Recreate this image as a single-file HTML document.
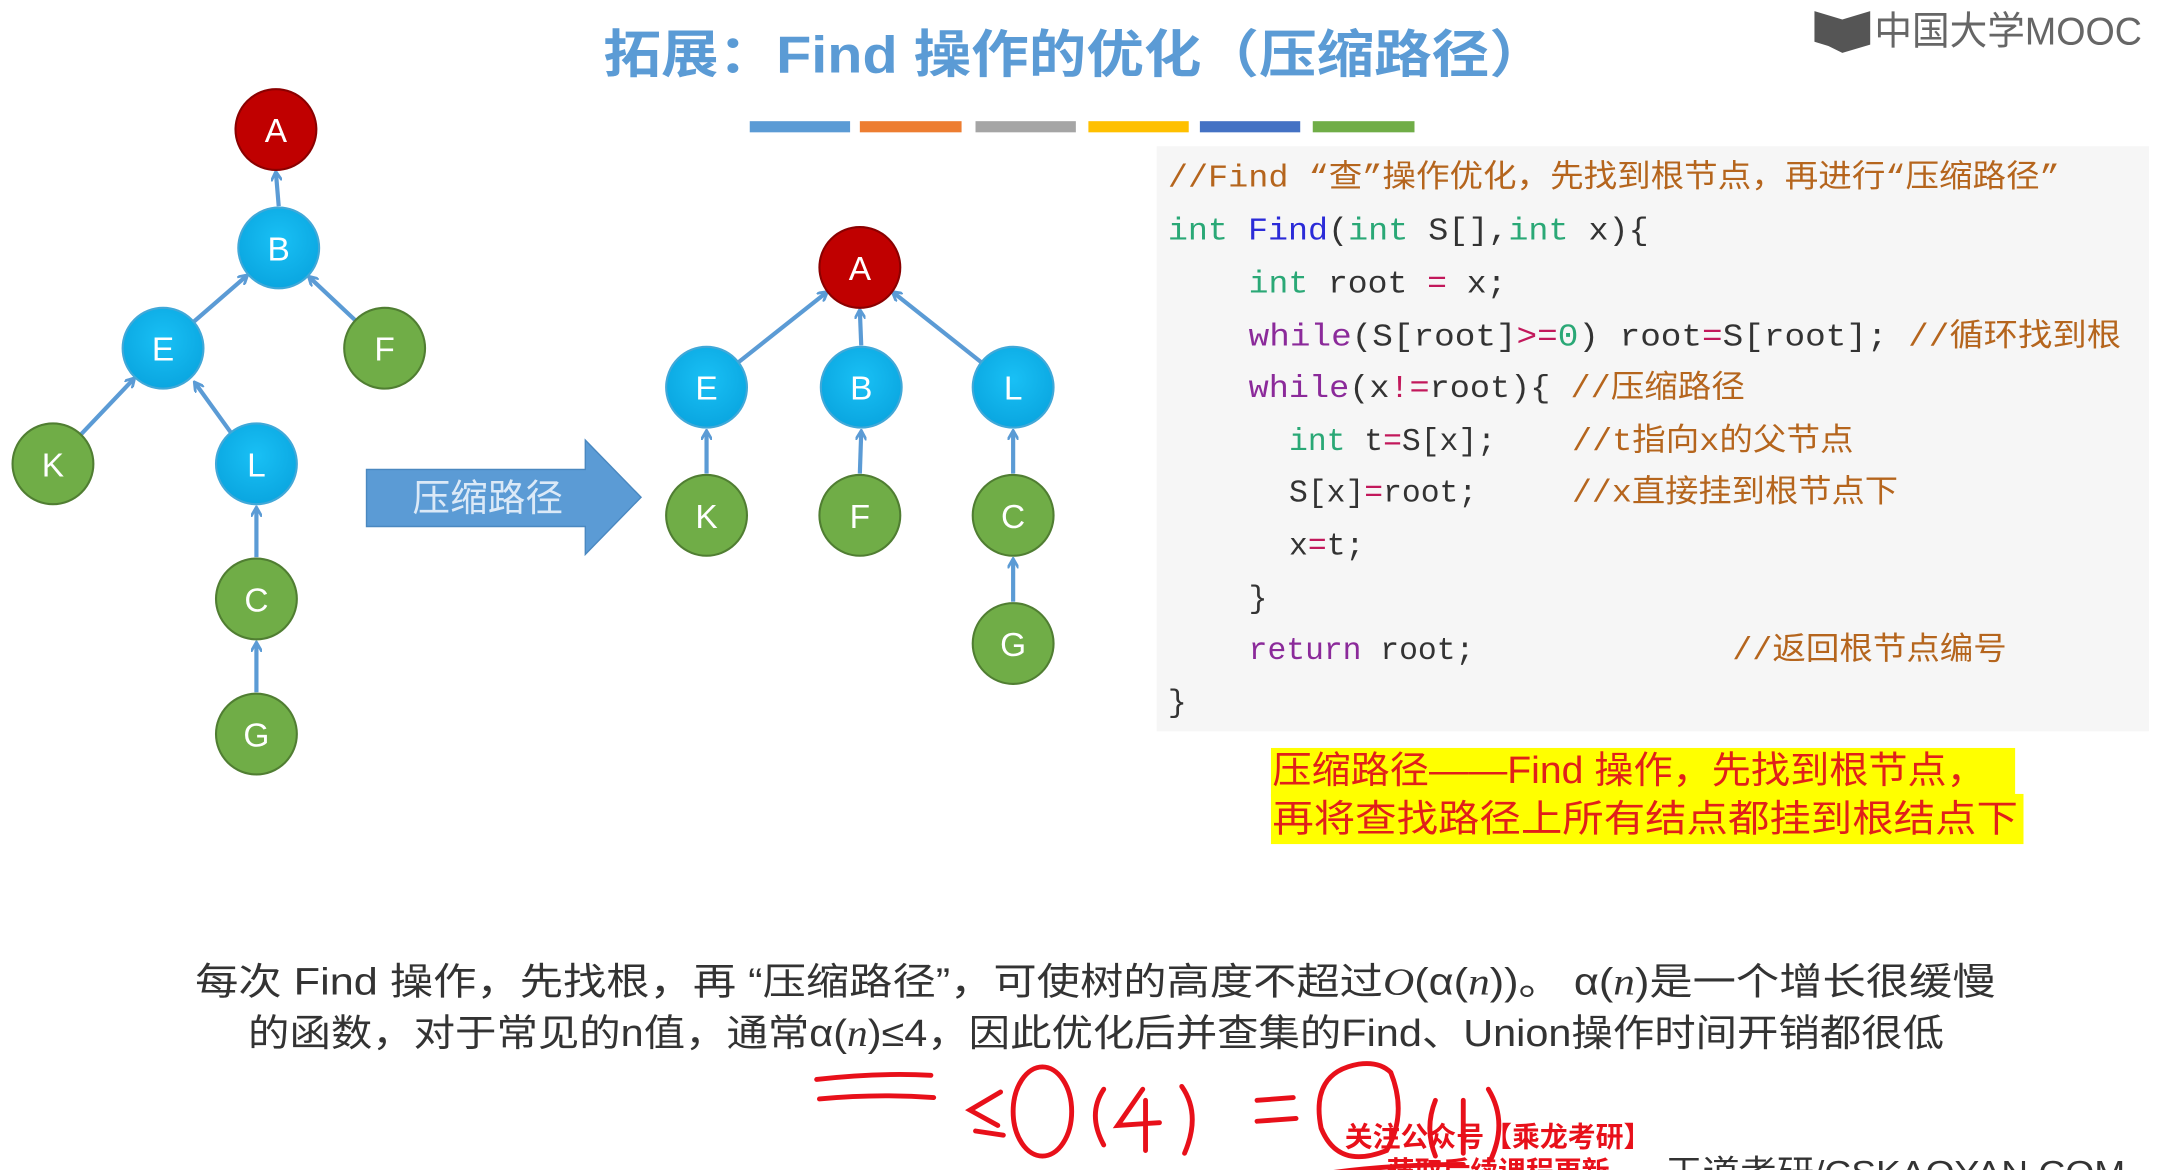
<!DOCTYPE html>
<html><head><meta charset="utf-8"><style>
html,body{margin:0;padding:0;background:#fff;overflow:hidden}
svg{display:block}
.cn{font-family:"Liberation Sans","Noto Sans CJK SC",sans-serif}
.mono{font-family:"Liberation Mono","Noto Sans CJK SC",monospace;font-size:22.5px}
</style></head><body>
<svg width="2174" height="1170" viewBox="0 0 1560 840" preserveAspectRatio="none" xmlns="http://www.w3.org/2000/svg">
<defs>
<marker id="ah" markerWidth="8" markerHeight="8" refX="6" refY="4" orient="auto" markerUnits="userSpaceOnUse">
<path d="M0,0 L7,4 L0,8" fill="none" stroke="#5b9bd5" stroke-width="2"/></marker>
<radialGradient id="gc" cx="50%" cy="40%" r="60%"><stop offset="0" stop-color="#19c0f5"/><stop offset="1" stop-color="#0aa6e0"/></radialGradient>
</defs>
<rect width="1560" height="840" fill="#fff"/>
<text x="433" y="52" textLength="677" lengthAdjust="spacingAndGlyphs" class="cn" font-size="37" font-weight="bold" fill="#5b9bd5">拓展：Find 操作的优化（压缩路径）</text>
<path d="M1302,8 L1322,14 L1342,8 L1342,32 L1322,38 L1312,33 L1302,30 Z" fill="#555"/>
<text x="1345" y="32" textLength="192" lengthAdjust="spacingAndGlyphs" class="cn" font-size="28" fill="#666">中国大学MOOC</text>
<rect x="538" y="87" width="72" height="8" fill="#5b9bd5"/>
<rect x="617" y="87" width="73" height="8" fill="#ed7d31"/>
<rect x="700" y="87" width="72" height="8" fill="#a5a5a5"/>
<rect x="781" y="87" width="72" height="8" fill="#ffc000"/>
<rect x="861" y="87" width="72" height="8" fill="#4472c4"/>
<rect x="942" y="87" width="73" height="8" fill="#70ad47"/>
<g stroke="#5b9bd5" stroke-width="3" marker-end="url(#ah)">
<line x1="200" y1="148" x2="198" y2="124"/>
<line x1="139" y1="231" x2="177" y2="198"/>
<line x1="255" y1="230" x2="222" y2="199"/>
<line x1="58" y1="312" x2="96" y2="272"/>
<line x1="166" y1="311" x2="140" y2="275"/>
<line x1="184" y1="400" x2="184" y2="365"/>
<line x1="184" y1="497" x2="184" y2="462"/>
<line x1="530" y1="260" x2="593" y2="210"/>
<line x1="618" y1="248" x2="617" y2="223"/>
<line x1="704" y1="260" x2="641" y2="210"/>
<line x1="507" y1="340" x2="507" y2="310"/>
<line x1="617" y1="340" x2="618" y2="310"/>
<line x1="727" y1="340" x2="727" y2="310"/>
<line x1="727" y1="432" x2="727" y2="402"/>
</g>
<g class="cn" font-size="24" text-anchor="middle" fill="#fff">
<g stroke-width="1.5">
<circle cx="198" cy="93" r="29" fill="#c00000" stroke="#8b0000"/>
<circle cx="200" cy="178" r="29" fill="url(#gc)" stroke="#41a8d8"/>
<circle cx="117" cy="250" r="29" fill="url(#gc)" stroke="#41a8d8"/>
<circle cx="276" cy="250" r="29" fill="#70ad47" stroke="#507e32"/>
<circle cx="38" cy="333" r="29" fill="#70ad47" stroke="#507e32"/>
<circle cx="184" cy="333" r="29" fill="url(#gc)" stroke="#41a8d8"/>
<circle cx="184" cy="430" r="29" fill="#70ad47" stroke="#507e32"/>
<circle cx="184" cy="527" r="29" fill="#70ad47" stroke="#507e32"/>
<circle cx="617" cy="192" r="29" fill="#c00000" stroke="#8b0000"/>
<circle cx="507" cy="278" r="29" fill="url(#gc)" stroke="#41a8d8"/>
<circle cx="618" cy="278" r="29" fill="url(#gc)" stroke="#41a8d8"/>
<circle cx="727" cy="278" r="29" fill="url(#gc)" stroke="#41a8d8"/>
<circle cx="507" cy="370" r="29" fill="#70ad47" stroke="#507e32"/>
<circle cx="617" cy="370" r="29" fill="#70ad47" stroke="#507e32"/>
<circle cx="727" cy="370" r="29" fill="#70ad47" stroke="#507e32"/>
<circle cx="727" cy="462" r="29" fill="#70ad47" stroke="#507e32"/>
</g>
<text x="198" y="102">A</text><text x="200" y="187">B</text><text x="117" y="259">E</text><text x="276" y="259">F</text>
<text x="38" y="342">K</text><text x="184" y="342">L</text><text x="184" y="439">C</text><text x="184" y="536">G</text>
<text x="617" y="201">A</text><text x="507" y="287">E</text><text x="618" y="287">B</text><text x="727" y="287">L</text>
<text x="507" y="379">K</text><text x="617" y="379">F</text><text x="727" y="379">C</text><text x="727" y="471">G</text>
</g>
<path d="M263,337 L420,337 L420,316 L460,357 L420,398 L420,378 L263,378 Z" fill="#5b9bd5" stroke="#4a88c0"/>
<text x="350" y="367" text-anchor="middle" class="cn" font-size="27" fill="#dbe9f7">压缩路径</text>
<rect x="830" y="105" width="712" height="420" fill="#f6f6f6"/>
<g class="mono">
<text x="838" y="134" textLength="640" lengthAdjust="spacingAndGlyphs" fill="#b5651d">//Find “查”操作优化，先找到根节点，再进行“压缩路径”</text>
<text x="838" y="172" textLength="345" lengthAdjust="spacingAndGlyphs"><tspan fill="#2aa876">int</tspan> <tspan fill="#2b2bd8">Find</tspan><tspan fill="#333">(</tspan><tspan fill="#2aa876">int</tspan><tspan fill="#333"> S[],</tspan><tspan fill="#2aa876">int</tspan><tspan fill="#333"> x){</tspan></text>
<text x="896" y="210" textLength="185" lengthAdjust="spacingAndGlyphs"><tspan fill="#2aa876">int</tspan><tspan fill="#333"> root </tspan><tspan fill="#c2185b">=</tspan><tspan fill="#333"> x;</tspan></text>
<text x="896" y="248" textLength="626" lengthAdjust="spacingAndGlyphs"><tspan fill="#8b2a9a">while</tspan><tspan fill="#333">(S[root]</tspan><tspan fill="#c2185b">&gt;=</tspan><tspan fill="#2aa876">0</tspan><tspan fill="#333">)  root</tspan><tspan fill="#c2185b">=</tspan><tspan fill="#333">S[root]; </tspan><tspan fill="#b5651d">//循环找到根</tspan></text>
<text x="896" y="285" textLength="356" lengthAdjust="spacingAndGlyphs"><tspan fill="#8b2a9a">while</tspan><tspan fill="#333">(x</tspan><tspan fill="#c2185b">!=</tspan><tspan fill="#333">root){ </tspan><tspan fill="#b5651d">//压缩路径</tspan></text>
<text x="925" y="323"><tspan fill="#2aa876">int</tspan><tspan fill="#333"> t</tspan><tspan fill="#c2185b">=</tspan><tspan fill="#333">S[x];</tspan></text>
<text x="1128" y="323" textLength="202" lengthAdjust="spacingAndGlyphs" fill="#b5651d">//t指向x的父节点</text>
<text x="925" y="360"><tspan fill="#333">S[x]</tspan><tspan fill="#c2185b">=</tspan><tspan fill="#333">root;</tspan></text>
<text x="1128" y="360" textLength="234" lengthAdjust="spacingAndGlyphs" fill="#b5651d">//x直接挂到根节点下</text>
<text x="925" y="398"><tspan fill="#333">x</tspan><tspan fill="#c2185b">=</tspan><tspan fill="#333">t;</tspan></text>
<text x="896" y="436" fill="#333">}</text>
<text x="896" y="473"><tspan fill="#8b2a9a">return</tspan><tspan fill="#333"> root;</tspan></text>
<text x="1243" y="473" textLength="197" lengthAdjust="spacingAndGlyphs" fill="#b5651d">//返回根节点编号</text>
<text x="838" y="511" fill="#333">}</text>
</g>
<rect x="912" y="537" width="534" height="35" fill="#ffff00"/>
<rect x="912" y="570" width="540" height="36" fill="#ffff00"/>
<g class="cn" font-size="27" fill="#e0201a">
<text x="913" y="562" textLength="512" lengthAdjust="spacingAndGlyphs">压缩路径——Find 操作，先找到根节点，</text>
<text x="913" y="597" textLength="535" lengthAdjust="spacingAndGlyphs">再将查找路径上所有结点都挂到根结点下</text>
</g>
<g class="cn" font-size="27" fill="#333">
<text x="140" y="714" textLength="1292" lengthAdjust="spacingAndGlyphs">每次 Find 操作，先找根，再 “压缩路径”，可使树的高度不超过<tspan font-style="italic" font-family="Liberation Serif">O</tspan>(α(<tspan font-style="italic" font-family="Liberation Serif">n</tspan>))。 α(<tspan font-style="italic" font-family="Liberation Serif">n</tspan>)是一个增长很缓慢</text>
<text x="178" y="751" textLength="1217" lengthAdjust="spacingAndGlyphs">的函数，对于常见的n值，通常α(<tspan font-style="italic" font-family="Liberation Serif">n</tspan>)≤4，因此优化后并查集的Find、Union操作时间开销都很低</text>
</g>
<g fill="none" stroke="#e8101a" stroke-width="3.5" stroke-linecap="round">
<path d="M586,775 Q630,770 668,772"/>
<path d="M588,789 Q630,785 670,788"/>
<path d="M718,784 L696,797 L716,808"/>
<path d="M700,812 L720,815"/>
<ellipse cx="748" cy="798" rx="21" ry="32"/>
<path d="M792,782 Q780,800 792,822"/>
<path d="M820,782 L802,808 L832,806 M822,790 L822,826"/>
<path d="M848,780 Q862,800 850,828"/>
<path d="M902,790 L928,788 M902,805 L930,803"/>
<path d="M975,764 Q940,770 948,810 Q960,840 995,826 Q1010,800 998,770 Q990,762 975,764"/>
<path d="M1030,790 Q1022,810 1030,830"/>
<path d="M1050,790 L1050,828"/>
<path d="M1068,782 Q1082,805 1070,832"/>
<path d="M955,842 Q1000,836 1050,836"/>
</g>
<g class="cn" font-size="20" font-weight="bold" fill="#e8101a">
<text x="965" y="823">关注公众号【乘龙考研】</text>
<text x="995" y="848">获取后续课程更新</text>
</g>
<text x="1195" y="850" textLength="330" lengthAdjust="spacingAndGlyphs" class="cn" font-size="24" fill="#333">王道考研/CSKAOYAN.COM</text>
</svg>
</body></html>
